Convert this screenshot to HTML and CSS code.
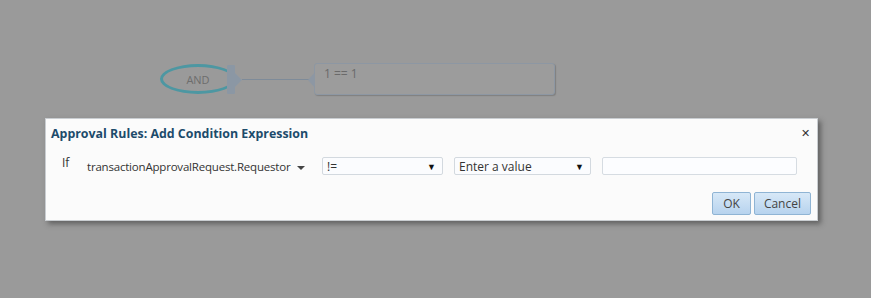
FILE: index.html
```html
<!DOCTYPE html>
<html lang="en">
<head>
  <meta charset="UTF-8">
  <title>Approval Rules</title>
  <link rel="stylesheet" href="styles.css">
</head>
<body>

  <div class="canvas">
    <div class="node-and">AND</div>
    <div class="node-port"></div>
    <div class="node-link"></div>
    <div class="node-expr">1 == 1</div>
  </div>

  <div class="dialog">
    <div class="dialog-head">
      <h1>Approval Rules: Add Condition Expression</h1>
      <span class="close-btn">&#x2715;</span>
    </div>
    <div class="cond-row">
      <span class="cond-if">If</span>
      <span class="cond-attr">transactionApprovalRequest.Requestor <span class="caret"></span></span>
      <div class="select sel-op">!=<span class="arrow">&#x25BC;</span></div>
      <div class="select sel-val">Enter a value<span class="arrow">&#x25BC;</span></div>
      <div class="text-input"></div>
    </div>
    <div class="dialog-foot">
      <button class="btn">OK</button>
      <button class="btn">Cancel</button>
    </div>
  </div>

</body>
</html>
```

FILE: styles.css
```css
html, body {
  margin: 0;
  padding: 0;
  height: 100%;
  background-color: #9a9a9a;
  font-family: "Open Sans", "Noto Sans", sans-serif;
  overflow: hidden;
}

/* diagram behind the modal */
.canvas {
  position: relative;
  width: 100%;
  height: 100%;
}

.node-and {
  position: absolute;
  left: 160px;
  top: 64px;
  width: 70px;
  height: 24px;
  border: 3px solid #4d97a2;
  border-radius: 50%;
  display: flex;
  align-items: center;
  justify-content: center;
  font-size: 11px;
  color: #6d6d6d;
}

.node-port {
  position: absolute;
  left: 227px;
  top: 65px;
  width: 8px;
  height: 29px;
  background-color: #8b97a4;
  border-radius: 1px;
}

.node-port::after {
  content: "";
  position: absolute;
  left: 8px;
  top: 8px;
  border-top: 7px solid transparent;
  border-bottom: 7px solid transparent;
  border-left: 7px solid #8b97a4;
}

.node-link {
  position: absolute;
  left: 242px;
  top: 79px;
  width: 70px;
  height: 1px;
  background-color: #7e8b99;
}

.node-expr {
  position: absolute;
  left: 314px;
  top: 63px;
  width: 230px;
  height: 23px;
  padding: 3px 0 4px 9px;
  border: 1px solid #8d97a3;
  border-radius: 3px;
  background-color: #9c9c9c;
  box-shadow: 1px 1px 1px rgba(90, 90, 90, 0.4);
  font-size: 12px;
  color: #6a6a6a;
  line-height: 14px;
}

.node-expr::before {
  content: "";
  position: absolute;
  left: -7px;
  top: 8px;
  border-top: 8px solid transparent;
  border-bottom: 8px solid transparent;
  border-right: 7px solid #8d97a3;
}

/* modal */
.dialog {
  position: absolute;
  left: 45px;
  top: 118px;
  width: 773px;
  height: 103px;
  background-color: #fbfbfb;
  border: 1px solid #c9cdd1;
  box-sizing: border-box;
  box-shadow: 3px 3px 5px rgba(60, 60, 60, 0.6);
  padding: 0 6px 0 5px;
}

.dialog-head {
  display: flex;
  justify-content: space-between;
  align-items: center;
  height: 27px;
  padding-top: 1px;
}

.dialog-head h1 {
  margin: 0;
  font-size: 12.4px;
  font-weight: bold;
  color: #1d4b6b;
}

.close-btn {
  font-size: 11px;
  color: #333;
  margin-right: 1px;
  margin-top: -2px;
}

.cond-row {
  display: flex;
  align-items: center;
  margin-top: 10px;
  font-size: 11.5px;
  color: #333;
}

.cond-if {
  width: 25px;
  padding-left: 11px;
  margin-top: -8px;
  font-size: 12px;
}

.cond-attr {
  width: 235px;
  display: flex;
  align-items: center;
  white-space: nowrap;
  letter-spacing: -0.2px;
}

.caret {
  display: inline-block;
  margin-left: 7px;
  margin-top: 4px;
  border-left: 4px solid transparent;
  border-right: 4px solid transparent;
  border-top: 4px solid #444;
}

.select {
  height: 18px;
  box-sizing: border-box;
  border: 1px solid #d3d9df;
  border-radius: 2px;
  background-color: #fbfcfe;
  display: flex;
  align-items: center;
  justify-content: space-between;
  padding: 0 6px 0 4px;
  font-size: 12px;
}

.sel-op {
  width: 121px;
  margin-right: 11px;
}

.sel-val {
  width: 137px;
  margin-right: 11px;
}

.arrow {
  font-size: 9px;
  color: #111;
}

.text-input {
  width: 195px;
  height: 18px;
  box-sizing: border-box;
  border: 1px solid #d6dce2;
  border-radius: 2px;
  background-color: #fcfdff;
}

.dialog-foot {
  display: flex;
  justify-content: flex-end;
  gap: 3px;
  margin-top: 17px;
}

.btn {
  height: 23px;
  padding: 0 9px;
  font-family: inherit;
  font-size: 12px;
  color: #444;
  border: 1px solid #8fb4d4;
  border-radius: 2px;
  background: linear-gradient(#d7e8f7, #b7d3ee);
}

.btn:first-child {
  padding: 0 10px;
}
```
